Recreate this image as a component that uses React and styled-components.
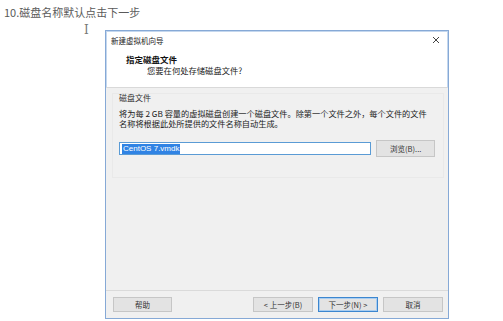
import React from "react";
import styled, { createGlobalStyle } from "styled-components";

const GlobalStyle = createGlobalStyle`
  html, body {
    margin: 0;
    padding: 0;
    background: #ffffff;
  }
  body {
    font-family: "Noto Sans CJK SC", "Noto Sans", sans-serif;
    width: 503px;
    height: 321px;
    overflow: hidden;
  }
`;

const Page = styled.div`
  position: relative;
  width: 503px;
  height: 321px;
  padding: 5px 0 0 4px;
  box-sizing: border-box;
`;

const Caption = styled.div`
  font-size: 11px;
  line-height: 14px;
  color: #5a5a5a;
  height: 25px;
`;

const TextCursor = styled.div`
  position: absolute;
  left: 84px;
  top: 24px;
  color: #777;
  font-family: "DejaVu Serif", serif;
  font-size: 12px;
  line-height: 12px;
`;

const Dialog = styled.div`
  margin-left: 101px;
  width: 344px;
  height: 289px;
  box-sizing: border-box;
  border: 1px solid #86a9d6;
  box-shadow: inset 0 0 0 1px #c4d7ee;
  display: flex;
  flex-direction: column;
  background: #fff;
`;

const TitleBar = styled.div`
  height: 16px;
  display: flex;
  align-items: center;
  justify-content: space-between;
  padding: 1px 8px 0 5px;
  font-size: 7.5px;
  color: #222;
  flex-shrink: 0;
`;

const Header = styled.div`
  height: 40px;
  padding: 6px 0 0 20px;
  box-sizing: border-box;
  border-bottom: 1px solid #d9d9d9;
  flex-shrink: 0;
`;

const HeaderTitle = styled.div`
  font-size: 8.5px;
  line-height: 11px;
  font-weight: 700;
  color: #111;
`;

const HeaderSub = styled.div`
  font-size: 8.3px;
  line-height: 10px;
  color: #222;
  padding-left: 21px;
`;

const Body = styled.div`
  flex: 1;
  background: #f0f0f0;
  padding: 5px 4px 0 6px;
`;

const Group = styled.div`
  border: 1px solid #e9e9e9;
  padding: 0 8px 0 6px;
  height: 85px;
  box-sizing: border-box;
`;

const GroupLabel = styled.div`
  font-size: 8px;
  line-height: 10px;
  color: #333;
  margin-top: -1px;
`;

const Desc = styled.div`
  margin-top: 5px;
  font-size: 8.2px;
  line-height: 10px;
  color: #222;
  width: 314px;
`;

const FileRow = styled.div`
  display: flex;
  align-items: center;
  gap: 5px;
  margin-top: 12px;
`;

const FileInput = styled.div`
  width: 254px;
  height: 13px;
  box-sizing: border-box;
  border: 1px solid #5a9bd5;
  background: #fff;
  display: flex;
  align-items: center;
  padding-left: 2px;
`;

const Selected = styled.span`
  background: #3083e4;
  color: #fff;
  font-family: "Liberation Sans", sans-serif;
  font-size: 8px;
  line-height: 10px;
  padding: 0 1px;
`;

const Button = styled.div`
  width: ${(p) => p.$w || 60}px;
  height: ${(p) => p.$h || 15}px;
  box-sizing: border-box;
  border: 1px solid ${(p) => (p.$focus ? "#3c86cf" : "#c6c6c6")};
  box-shadow: ${(p) => (p.$focus ? "inset 0 0 0 1px #a9cdf0" : "none")};
  background: #e3e3e3;
  display: flex;
  align-items: center;
  justify-content: center;
  font-size: 7.5px;
  color: #333;
`;

const Footer = styled.div`
  height: 28px;
  box-sizing: border-box;
  background: #f0f0f0;
  border-top: 1px solid #dadada;
  padding: 6px 5px 0 7px;
  display: flex;
  gap: 5px;
  flex-shrink: 0;
`;

const Spacer = styled.div`
  flex: 1;
`;

const CloseIcon = () => (
  <svg width="8" height="8" viewBox="0 0 8 8">
    <path d="M1 1L7 7M7 1L1 7" stroke="#444" strokeWidth="1" />
  </svg>
);

export default function App() {
  return (
    <>
      <GlobalStyle />
      <Page>
        <Caption>10.磁盘名称默认点击下一步</Caption>
        <TextCursor>I</TextCursor>
        <Dialog>
          <TitleBar>
            <span>新建虚拟机向导</span>
            <CloseIcon />
          </TitleBar>
          <Header>
            <HeaderTitle>指定磁盘文件</HeaderTitle>
            <HeaderSub>您要在何处存储磁盘文件?</HeaderSub>
          </Header>
          <Body>
            <Group>
              <GroupLabel>磁盘文件</GroupLabel>
              <Desc>
                将为每 2 GB 容量的虚拟磁盘创建一个磁盘文件。除第一个文件之外，每个文件的文件名称将根据此处所提供的文件名称自动生成。
              </Desc>
              <FileRow>
                <FileInput>
                  <Selected>CentOS 7.vmdk</Selected>
                </FileInput>
                <Button $w={59} $h={17}>浏览(B)...</Button>
              </FileRow>
            </Group>
          </Body>
          <Footer>
            <Button $w={59}>帮助</Button>
            <Spacer />
            <Button>&lt; 上一步(B)</Button>
            <Button $focus>下一步(N) &gt;</Button>
            <Button>取消</Button>
          </Footer>
        </Dialog>
      </Page>
    </>
  );
}
